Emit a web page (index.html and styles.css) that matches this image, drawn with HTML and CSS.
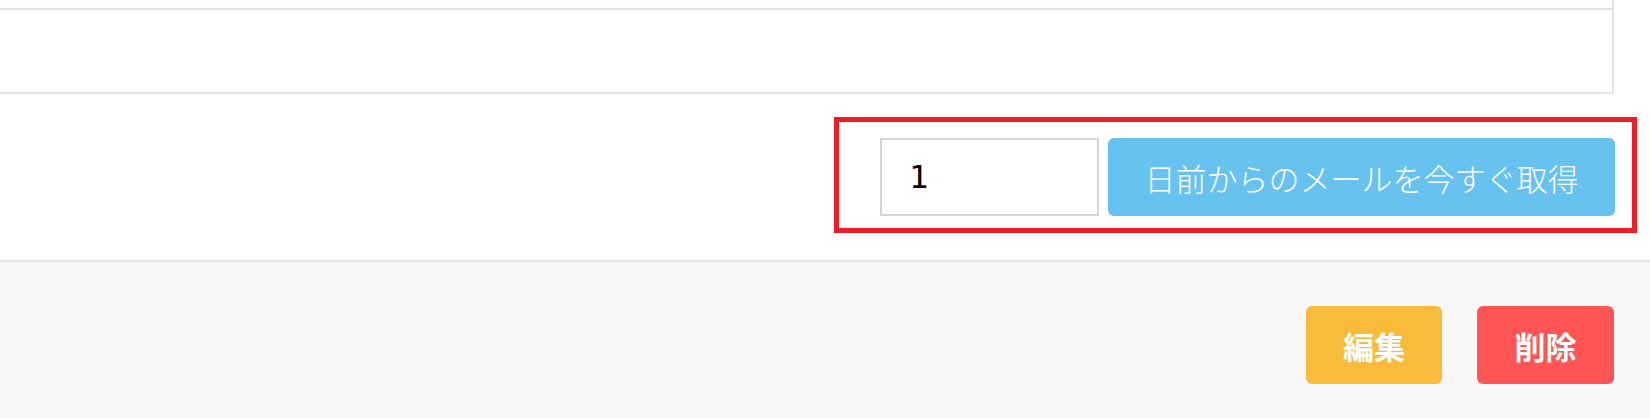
FILE: index.html
```html
<!DOCTYPE html>
<html lang="ja">
<head>
    <meta charset="UTF-8">
    <meta name="viewport" content="width=device-width, initial-scale=1.0">
    <title>メール取得</title>
    <link rel="stylesheet" href="styles.css">
</head>
<body>
    <div class="panel">
        <div class="table">
            <div class="row row-cut"></div>
            <div class="row"></div>
        </div>
        <div class="fetch">
            <div class="highlight">
                <input type="text" class="days" value="1">
                <button class="fetch-btn">日前からのメールを今すぐ取得</button>
            </div>
        </div>
    </div>
    <div class="footer">
        <button class="btn btn-edit">編集</button>
        <button class="btn btn-delete">削除</button>
    </div>
</body>
</html>
```

FILE: styles.css
```css
body {
    margin: 0;
    font-family: "Noto Sans CJK JP", "Noto Sans", sans-serif;
    background-color: #ffffff;
}

.panel {
    padding: 0 36px 27px 0;
    border-bottom: 2px solid #e1e3ef;
}

.table {
    border-right: 2px solid #e1e3ef;
    border-bottom: 2px solid #e1e3ef;
}

.row {
    height: 82px;
    border-top: 2px solid #e1e3ef;
}

.row-cut {
    height: 8px;
    border-top: none;
}

.fetch {
    display: flex;
    justify-content: flex-end;
    margin: 23px -23px 0 0;
}

.highlight {
    display: flex;
    gap: 9px;
    padding: 16px 17px 12px 41px;
    border: 5px solid #ee1c25;
}

.days {
    box-sizing: border-box;
    width: 219px;
    height: 78px;
    padding: 0 0 0 27px;
    border: 2px solid #d6d6d6;
    border-radius: 0;
    font-family: "DejaVu Sans Mono", monospace;
    font-size: 32px;
    color: #000000;
    outline: none;
}

.fetch-btn {
    width: 507px;
    height: 78px;
    padding: 0;
    border: none;
    border-radius: 6px;
    background-color: #68c2ef;
    color: #ffffff;
    font-family: "Noto Sans CJK JP", sans-serif;
    font-size: 31px;
    font-weight: 300;
    cursor: pointer;
}

.footer {
    display: flex;
    justify-content: flex-end;
    gap: 35px;
    height: 156px;
    padding: 44px 36px 0 0;
    box-sizing: border-box;
    background-color: #f8f8f8;
}

.btn {
    width: 136px;
    height: 78px;
    border: none;
    border-radius: 6px;
    color: #ffffff;
    font-family: "Noto Sans CJK JP", sans-serif;
    font-size: 31px;
    font-weight: 700;
    cursor: pointer;
}

.btn-edit {
    background-color: #f9bb3c;
}

.btn-delete {
    width: 137px;
    background-color: #ff5555;
}
```
